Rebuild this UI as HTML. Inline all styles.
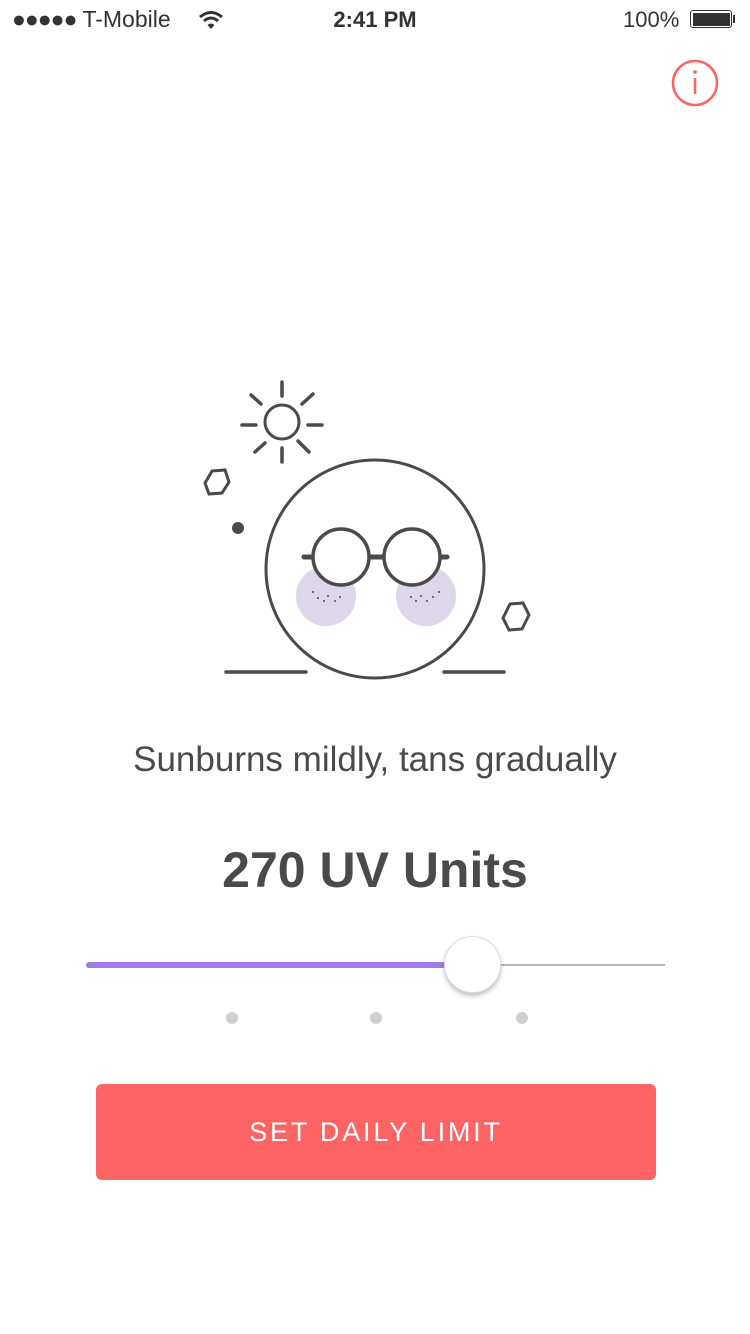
<!DOCTYPE html>
<html><head><meta charset="utf-8"><style>
body{margin:0;width:750px;height:1334px;background:#fff;font-family:"Liberation Sans",sans-serif;position:relative;overflow:hidden;color:#4a4a4a}
.a{position:absolute}
</style></head><body>
<div class="a" style="left:12px;top:6px;font-size:23px;color:#333;letter-spacing:0px"><span style="letter-spacing:-1px">●●●●●</span> T-Mobile</div>
<svg class="a" style="left:198px;top:9px" width="26" height="22" viewBox="0 0 26 22"><path d="M2 8 Q13 -1 24 8" stroke="#333" stroke-width="3" fill="none"/><path d="M6 12 Q13 6 20 12" stroke="#333" stroke-width="3" fill="none"/><path d="M9.5 16 L13 20 L16.5 16 Q13 13 9.5 16Z" fill="#333"/></svg>
<div class="a" style="left:0;width:750px;text-align:center;top:7px;font-size:22px;font-weight:bold;color:#333">2:41 PM</div>
<div class="a" style="left:623px;top:7px;font-size:22px;color:#333">100%</div>
<div class="a" style="left:690px;top:10px;width:42px;height:18px;border:1.5px solid #333;border-radius:3px;box-sizing:border-box;padding:1.5px"><div style="background:#333;width:100%;height:100%"></div></div>
<div class="a" style="left:733px;top:15px;width:2px;height:8px;background:#333"></div>
<svg class="a" style="left:670px;top:58px" width="50" height="50"><circle cx="25" cy="25" r="22" stroke="#ff6464" stroke-width="2.5" fill="none"/><line x1="25" y1="20" x2="25" y2="36" stroke="#ff6464" stroke-width="2.5"/><circle cx="25" cy="14" r="1.8" fill="#ff6464"/></svg>
<svg class="a" style="left:0;top:0" width="750" height="700">
<g stroke="#4a4a4a" stroke-width="3.5" stroke-linecap="round" fill="none">
<circle cx="282" cy="422" r="17" stroke-width="3"/>
<line x1="282" y1="382" x2="282" y2="396"/><line x1="282" y1="448" x2="282" y2="462"/>
<line x1="242" y1="425" x2="256" y2="425"/><line x1="308" y1="425" x2="322" y2="425"/>
<line x1="251" y1="395" x2="261" y2="404"/><line x1="302" y1="404" x2="313" y2="394"/>
<line x1="255" y1="452" x2="265" y2="443"/><line x1="298" y1="441" x2="309" y2="452"/>
<circle cx="375" cy="569" r="109" stroke-width="3"/>
<circle cx="326" cy="596" r="30" fill="#ded6ea" stroke="none"/>
<circle cx="426" cy="596" r="30" fill="#ded6ea" stroke="none"/>
<circle cx="341" cy="557" r="28" fill="#fff"/>
<circle cx="412" cy="557" r="28" fill="#fff"/>
<line x1="369" y1="557" x2="384" y2="557" stroke-width="5" stroke-linecap="butt"/>
<line x1="304" y1="557" x2="312" y2="557" stroke-width="5"/>
<line x1="441" y1="557" x2="447" y2="557" stroke-width="5"/>
<line x1="226" y1="672" x2="306" y2="672"/><line x1="444" y1="672" x2="504" y2="672"/>
<polygon points="212,471 225,470 229,482 222,493 209,494 205,483" stroke-width="3"/>
<polygon points="510,604 523,603 529,615 522,629 509,630 503,618" stroke-width="3"/>
</g>
<circle cx="238" cy="528" r="6" fill="#4a4a4a"/>
<g fill="#4a4a4a"><circle cx="313" cy="592" r="1"/><circle cx="318" cy="598" r="1"/><circle cx="324" cy="601" r="1"/><circle cx="328" cy="596" r="1"/><circle cx="335" cy="601" r="1"/><circle cx="340" cy="597" r="1"/>
<circle cx="411" cy="597" r="1"/><circle cx="416" cy="601" r="1"/><circle cx="421" cy="596" r="1"/><circle cx="427" cy="601" r="1"/><circle cx="433" cy="597" r="1"/><circle cx="439" cy="592" r="1"/></g>
</svg>
<div class="a" style="left:0;width:750px;text-align:center;top:740px;font-size:35px;color:#4a4a4a">Sunburns mildly, tans gradually</div>
<div class="a" style="left:0;width:750px;text-align:center;top:841px;font-size:50px;font-weight:bold;color:#4a4a4a">270 UV Units</div>
<div class="a" style="left:86px;top:962px;width:370px;height:6px;border-radius:3px;background:#a07ce4"></div>
<div class="a" style="left:495px;top:964px;width:170px;height:2px;background:#b5b5b5"></div>
<div class="a" style="left:444px;top:936px;width:55px;height:55px;border-radius:50%;background:#fff;border:1px solid #ddd;box-shadow:0 3px 5px rgba(0,0,0,.25)"></div>
<div class="a" style="left:226px;top:1012px;width:12px;height:12px;border-radius:50%;background:#cfcfcf"></div>
<div class="a" style="left:370px;top:1012px;width:12px;height:12px;border-radius:50%;background:#cfcfcf"></div>
<div class="a" style="left:516px;top:1012px;width:12px;height:12px;border-radius:50%;background:#cfcfcf"></div>
<div class="a" style="left:96px;top:1084px;width:560px;height:96px;border-radius:6px;background:#ff6464;color:#fff;font-size:27px;letter-spacing:2.8px;text-align:center;line-height:96px">SET DAILY LIMIT</div>
</body></html>
